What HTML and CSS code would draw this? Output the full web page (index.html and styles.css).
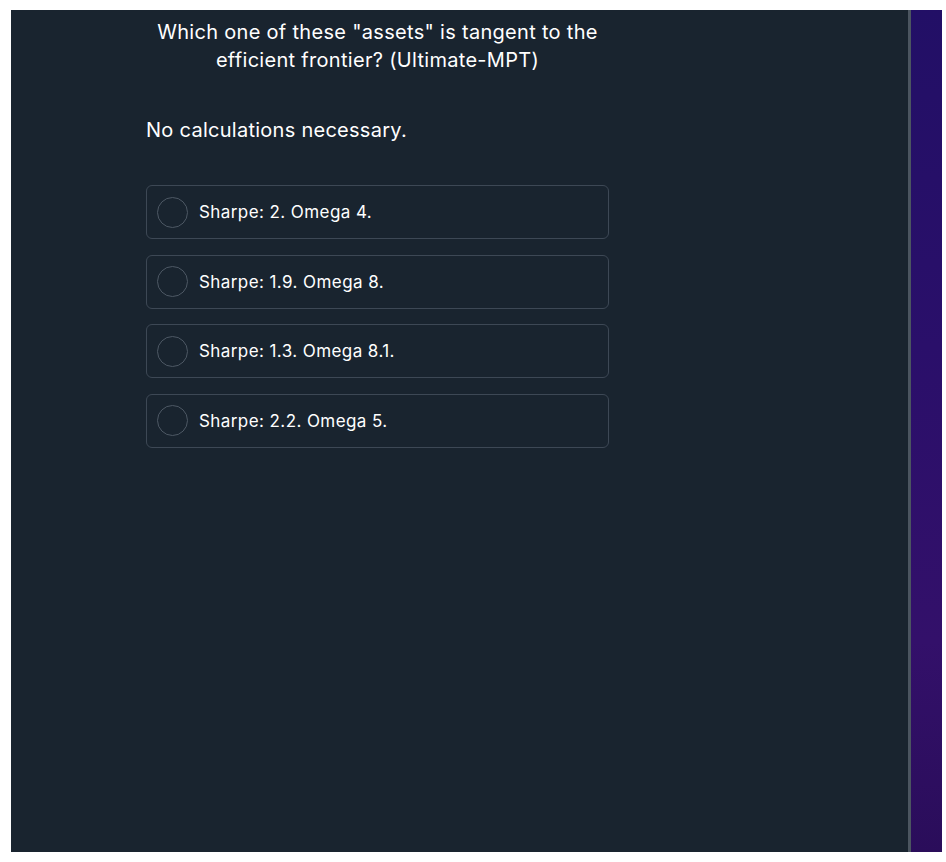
FILE: index.html
```html
<!DOCTYPE html>
<html>
<head>
<meta charset="utf-8">
<link rel="stylesheet" href="styles.css">
</head>
<body>
<div class="frame">
  <main class="panel">
    <div class="quiz">
      <h1 class="title">Which one of these "assets" is tangent to the efficient frontier? (Ultimate-MPT)</h1>
      <p class="prompt">No calculations necessary.</p>
      <div class="options">
        <label class="option"><span class="radio"></span><span class="text">Sharpe: 2. Omega 4.</span></label>
        <label class="option"><span class="radio"></span><span class="text">Sharpe: 1.9. Omega 8.</span></label>
        <label class="option"><span class="radio"></span><span class="text">Sharpe: 1.3. Omega 8.1.</span></label>
        <label class="option"><span class="radio"></span><span class="text">Sharpe: 2.2. Omega 5.</span></label>
      </div>
    </div>
  </main>
  <aside class="side"></aside>
</div>
</body>
</html>
```
FILE: styles.css
```css
html, body {
  margin: 0;
  padding: 0;
  background: #ffffff;
}
body {
  font-family: Inter, "Noto Sans", sans-serif;
  color: #ffffff;
}
.frame {
  display: flex;
  height: 842px;
  padding: 10px 4px 10px 11px;
}
.panel {
  width: 897px;
  background: #19242f;
  border-right: 3px solid #4b5560;
  box-sizing: content-box;
}
.side {
  flex: 1;
  background: linear-gradient(180deg, #220f66 0%, #2a0f6a 40%, #33106a 75%, #2a0d5a 100%);
}
.quiz {
  width: 463px;
  margin-left: 135px;
  padding-top: 8px;
}
.title {
  margin: 0;
  font-size: 20px;
  font-weight: 400;
  line-height: 28px;
  letter-spacing: 0.3px;
  text-align: center;
  padding: 0 10px;
}
.prompt {
  margin: 42px 0 0;
  font-size: 20px;
  font-weight: 400;
  line-height: 28px;
  letter-spacing: 0.27px;
}
.options {
  display: flex;
  flex-direction: column;
  gap: 15.67px;
  margin-top: 41px;
}
.option {
  display: flex;
  align-items: center;
  height: 54px;
  box-sizing: border-box;
  border: 1px solid #3d4855;
  border-radius: 6px;
  padding-left: 10px;
}
.radio {
  width: 31px;
  height: 31px;
  box-sizing: border-box;
  border: 1.5px solid #4d5864;
  border-radius: 50%;
  margin-right: 11px;
}
.text {
  font-size: 17px;
  line-height: 24px;
  letter-spacing: 0.42px;
}
```
